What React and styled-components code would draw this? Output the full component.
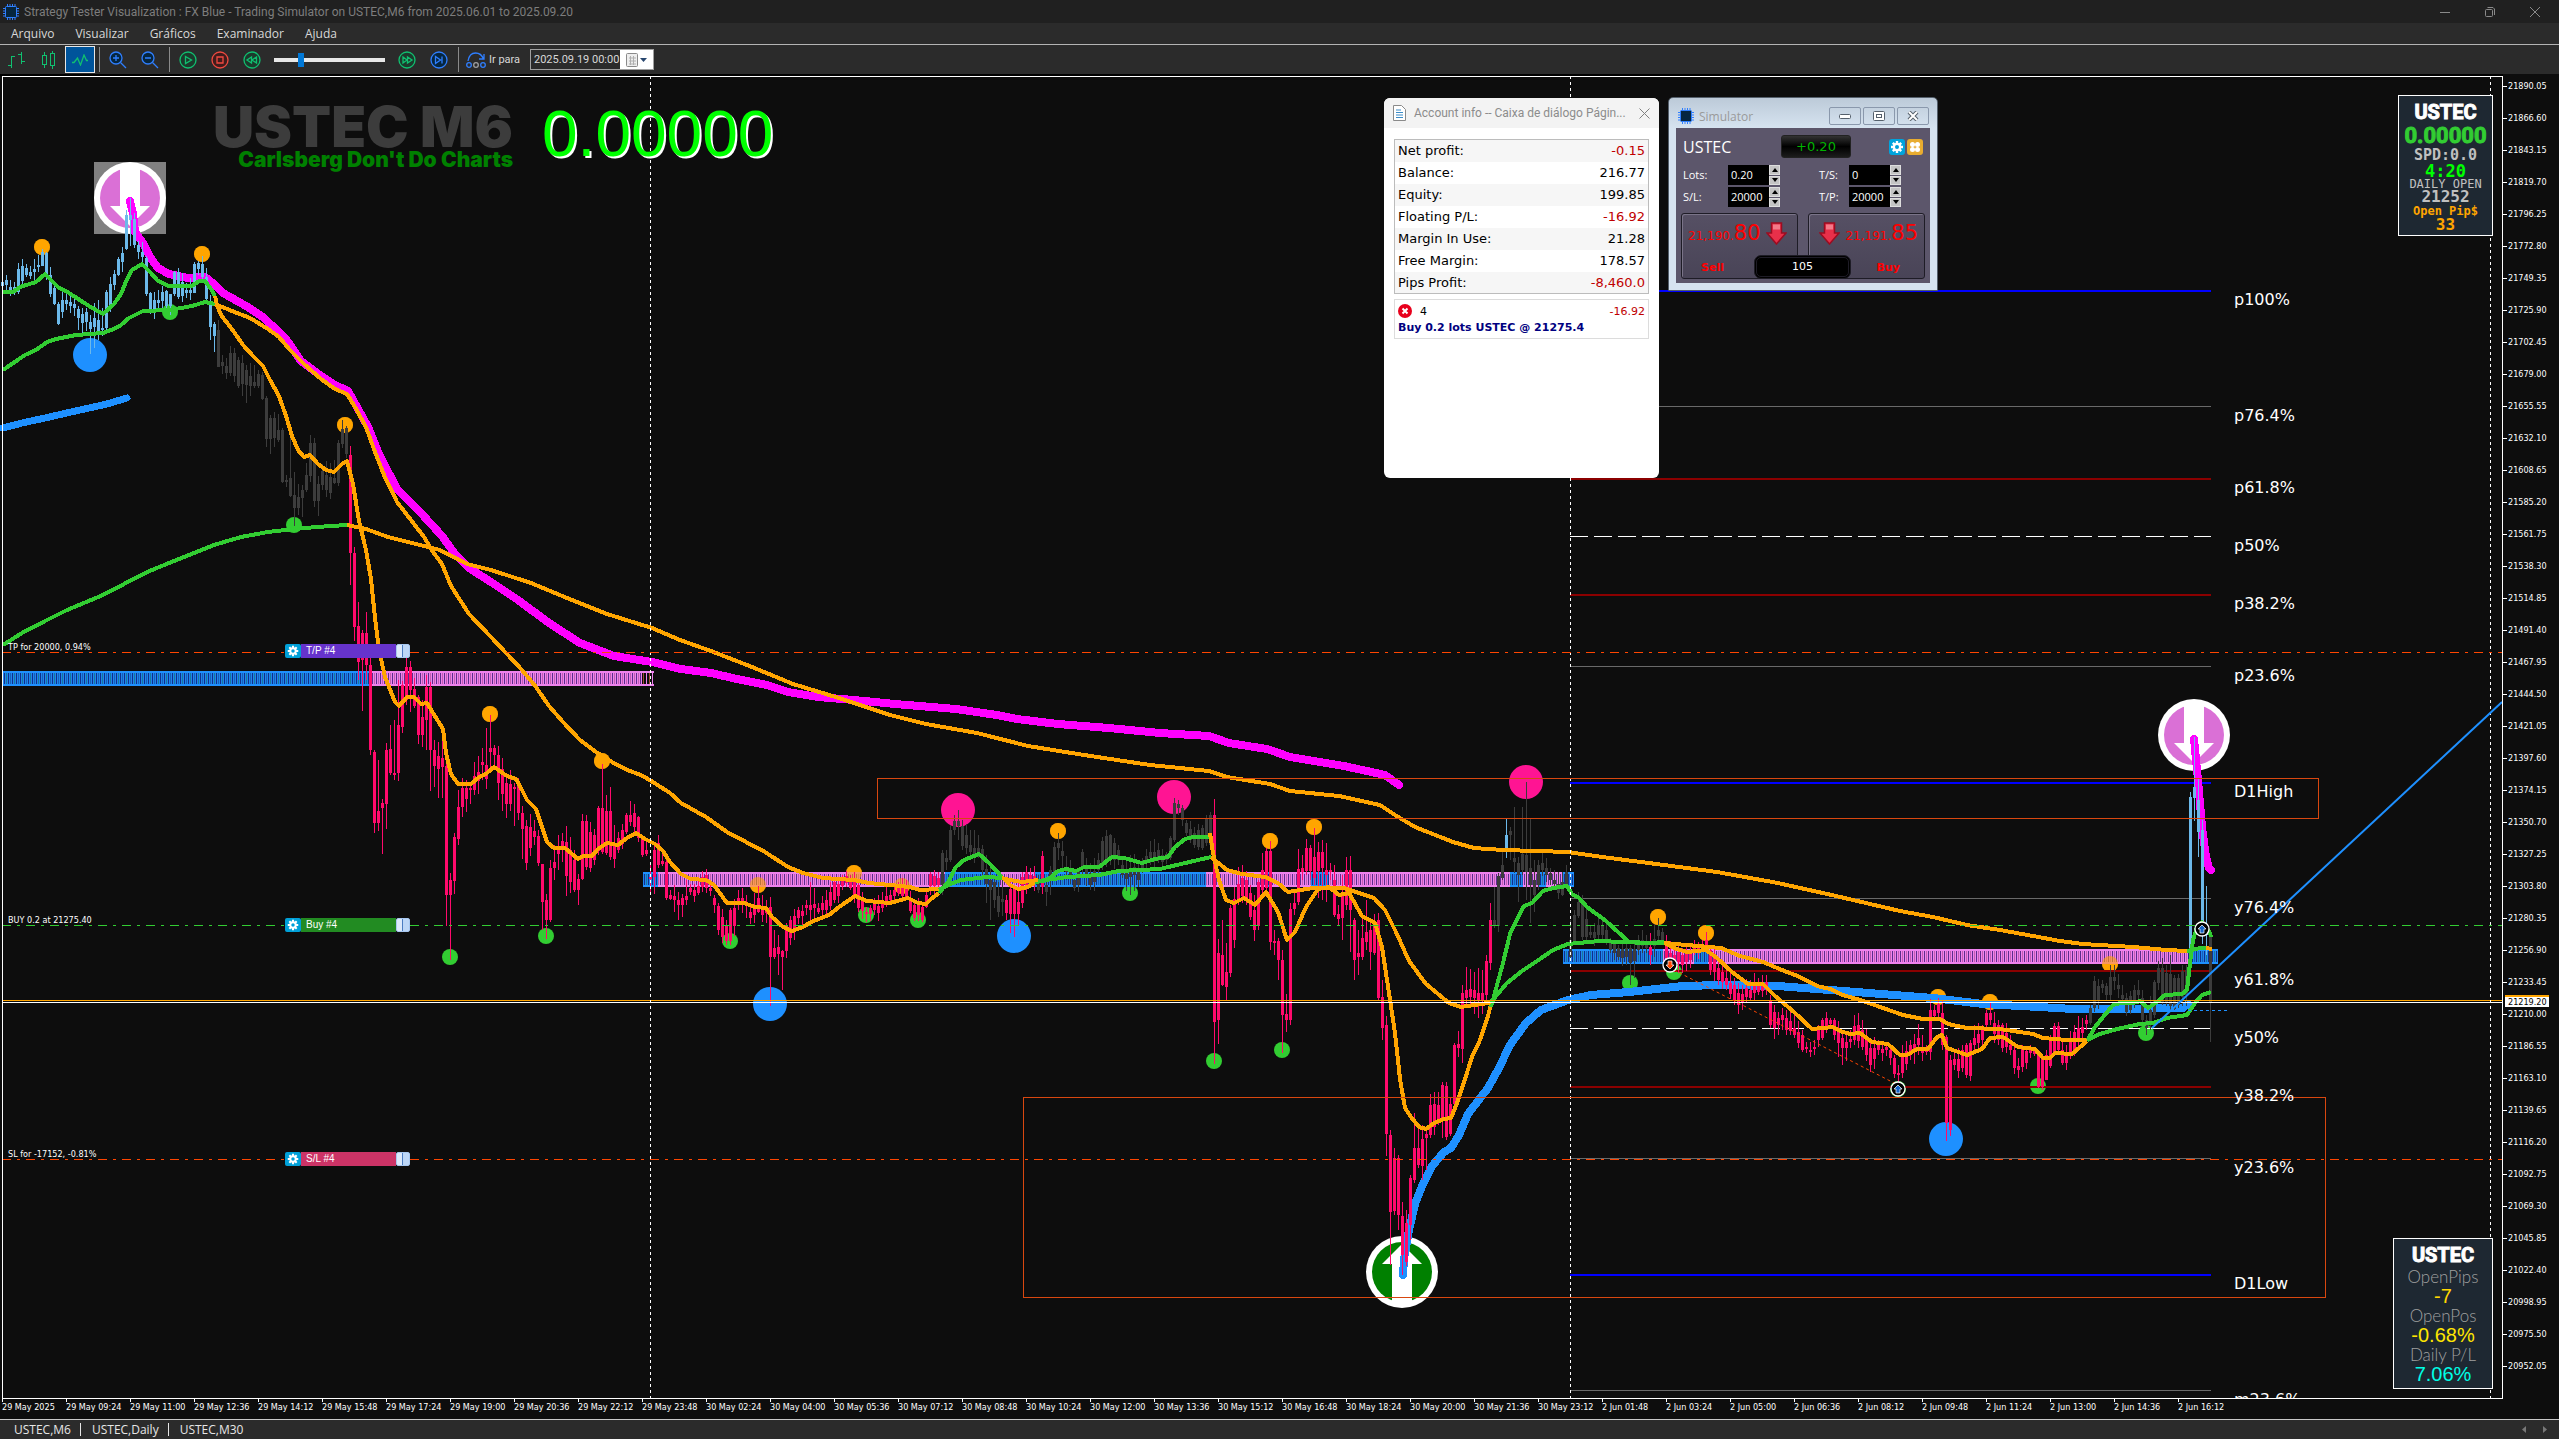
import React from 'react';
import styled, { createGlobalStyle } from 'styled-components';

const GlobalStyle = createGlobalStyle`
	* {
		box-sizing: border-box;
	}
	body {
		margin: 0;
		background: #0d0d0d;
		font-family: 'Open Sans', 'Noto Sans', sans-serif;
		font-size: 12px;
	}
	button, input {
		font: inherit;
		color: inherit;
		margin: 0;
		padding: 0;
		border: 0;
		background: none;
	}
	ul {
		list-style: none;
		margin: 0;
		padding: 0;
	}
`;

const verdana = "'DejaVu Sans', Verdana, sans-serif";
const tahoma = "'DejaVu Sans Condensed', 'Open Sans', sans-serif";

/* ---------- chart data ---------- */

// each key bar: x high bodyTop bodyBottom low
const BARS = `2 278 282 286 292;6 275 280 285 290;14 282 287 289 295;18 263 269 292 294;26 264 268 275 277;30 266 272 276 279;38 255 265 267 272;42 249 252 266 266;46 252 253 275 280;54 281 288 304 305;58 302 304 324 325;66 294 300 304 310;74 296 304 308 316;78 306 309 318 330;86 308 312 322 331;90 315 322 329 354;98 300 320 331 340;102 308 328 330 336;106 290 292 328 332;114 270 274 285 290;118 257 259 275 276;122 247 253 262 272;126 210 215 249 250;130 198 215 220 246;134 213 219 245 248;138 241 245 252 259;142 242 252 257 263;146 256 258 294 296;150 292 293 309 314;158 290 300 303 310;166 290 291 306 312;170 294 294 306 315;174 271 272 294 296;178 268 272 297 299;186 283 290 293 298;190 278 290 293 300;194 262 264 293 293;198 261 263 269 275;202 256 264 277 283;206 268 277 299 301;210 295 301 327 340;214 322 324 336 352;
218 320 330 367 367;222 355 362 366 374;226 358 366 373 379;230 346 353 373 376;238 357 360 386 388;246 365 370 385 403;254 365 382 386 388;258 370 374 386 388;262 372 375 399 400;266 396 398 439 447;270 415 418 439 454;274 412 418 438 447;278 414 430 440 442;282 428 430 482 483;286 475 480 482 487;290 435 478 496 497;294 472 495 508 526;298 484 497 508 515;302 485 490 498 517;306 463 475 490 492;310 435 443 476 482;314 438 443 501 507;318 476 484 501 516;322 464 471 485 490;330 463 477 493 499;334 460 478 483 484;338 440 443 483 486;342 420 429 444 448;346 426 428 454 458;
350 446 455 553 585;354 547 553 627 641;358 602 626 662 680;362 630 633 660 711;366 612 633 665 680;370 650 665 750 755;374 750 752 823 833;378 760 811 823 831;382 799 803 808 854;386 743 750 804 829;390 725 749 773 775;394 720 773 775 780;398 680 725 773 781;402 681 685 727 733;406 655 667 700 705;410 661 667 690 712;414 678 689 706 708;418 695 697 735 744;422 700 717 735 747;426 675 687 720 750;430 682 687 750 791;434 740 750 766 787;442 740 758 767 798;446 757 766 895 926;450 873 880 895 960;454 833 837 881 894;458 790 807 839 845;462 778 788 807 817;470 785 788 790 804;474 762 776 790 795;482 748 762 765 780;486 728 765 779 789;490 715 748 752 770;494 745 748 755 765;498 746 755 783 800;506 773 783 804 818;510 770 784 804 811;514 783 787 789 826;518 778 781 813 820;522 806 813 829 859;526 820 826 863 870;534 820 831 837 845;538 830 836 863 866;542 864 864 902 930;546 894 900 920 939;550 860 868 920 922;554 845 862 868 880;562 833 841 848 862;566 826 842 876 896;574 850 860 890 892;578 874 879 890 905;582 814 821 879 880;586 815 821 867 870;594 829 835 860 865;598 806 808 851 855;602 764 808 852 854;606 795 811 853 855;610 787 811 857 860;614 825 845 859 868;618 832 838 850 853;626 813 815 832 834;630 801 815 822 826;638 816 817 838 842;642 838 839 855 857;646 840 850 854 856;650 862 877 879 893;654 842 850 877 894;658 835 843 865 868;662 850 861 864 866;666 860 862 898 900;
670 890 895 899 900;678 892 900 905 920;682 894 898 905 917;686 880 896 900 905;690 884 888 892 895;698 881 886 893 895;706 869 875 888 893;710 880 888 891 896;714 895 898 905 913;718 903 906 930 935;726 920 925 941 945;730 908 910 941 945;738 890 898 902 910;746 895 903 905 918;750 903 912 918 924;758 886 898 912 913;766 900 911 913 923;770 897 907 957 1006;774 930 948 957 959;782 950 951 957 990;786 923 926 951 958;790 916 920 938 945;798 907 910 918 924;806 900 905 908 915;810 882 905 910 923;818 903 908 912 914;826 890 900 910 915;834 879 882 900 903;842 875 880 886 890;850 875 879 888 890;858 880 885 908 912;866 907 912 914 922;874 898 900 910 915;882 892 903 908 912;890 890 895 900 905;898 882 887 893 896;906 880 887 897 898;914 900 905 918 921;922 903 907 920 922;926 890 895 907 908;930 872 874 886 895;938 872 878 885 890;
942 850 853 885 895;946 850 858 862 870;950 825 830 860 862;954 815 821 830 835;958 810 821 826 840;962 820 826 846 850;970 830 845 852 858;978 835 848 853 858;982 845 849 870 875;990 865 880 890 920;994 878 882 900 908;998 882 896 912 917;1002 880 899 902 916;1006 895 900 913 920;1010 880 889 914 933;1014 885 889 914 937;1018 880 902 914 926;1022 872 877 903 908;1030 868 875 880 885;1038 875 880 890 893;1042 851 856 887 894;1046 882 885 892 906;1050 866 870 880 895;1054 842 847 875 880;1058 833 843 848 860;1066 856 867 872 880;1074 875 880 888 891;1078 868 870 885 892;1082 849 852 866 875;1090 863 873 885 890;1098 853 860 870 875;1102 837 841 866 870;1110 834 835 860 865;1118 845 850 860 865;1122 860 865 875 878;1130 855 870 877 895;1138 860 872 880 887;1142 858 862 868 873;1150 841 852 858 865;1158 843 850 858 863;1166 852 854 860 864;1170 836 838 858 860;1174 798 803 840 842;1178 800 804 808 815;1182 805 808 820 826;1186 820 823 833 836;1194 827 833 845 848;1198 824 830 847 850;1202 825 828 848 850;1210 812 815 845 848;
1214 799 815 1022 1064;1218 939 953 1020 1044;1222 920 955 985 986;1226 943 972 987 1000;1230 905 908 973 977;1238 867 884 900 905;1246 871 880 900 905;1250 885 893 917 920;1254 895 910 930 941;1258 880 882 926 930;1262 853 870 890 895;1266 848 851 888 893;1270 841 851 942 950;1274 930 941 943 955;1278 938 941 960 980;1282 950 960 1015 1053;1286 994 1014 1020 1032;1290 903 909 1020 1025;1294 890 903 909 915;1298 849 869 902 905;1302 855 868 872 880;1306 839 848 871 875;1310 845 848 871 880;1314 828 857 878 885;1318 842 852 871 898;1322 840 852 868 900;1326 843 870 875 902;1330 863 870 872 880;1334 865 880 915 917;1338 905 914 919 926;1342 875 895 918 940;1346 857 870 905 910;1350 856 870 910 952;1354 918 920 960 980;1358 930 953 957 975;1362 915 938 957 960;1366 900 932 942 950;1370 920 930 952 970;1374 914 922 953 955;1378 913 920 998 1000;1382 980 997 1028 1040;1386 1016 1025 1134 1156;1390 1130 1135 1212 1265;1394 1148 1158 1211 1215;1398 1155 1158 1215 1230;1402 1202 1216 1255 1275;1406 1210 1223 1262 1266;1410 1175 1178 1225 1240;1414 1113 1148 1180 1183;1418 1128 1148 1165 1168;1422 1125 1139 1166 1180;1426 1130 1134 1138 1170;1430 1094 1105 1135 1138;1438 1092 1105 1120 1125;1442 1082 1085 1120 1138;1446 1082 1086 1137 1140;1450 1098 1104 1134 1136;1454 1043 1045 1104 1108;1458 1031 1044 1048 1057;1462 985 993 1049 1063;1466 967 990 998 1004;1474 972 990 998 1014;1482 970 993 1000 1014;1486 955 961 995 1000;1490 903 920 963 970;
1494 887 920 926 928;1498 873 876 926 932;1502 850 865 878 880;1506 818 835 852 858;1510 827 831 835 860;1514 807 858 862 873;1518 857 863 875 902;1522 807 854 870 875;1526 782 855 872 900;1530 818 868 885 923;1534 860 880 895 912;1538 860 865 885 890;1542 852 863 870 876;1550 868 873 880 885;1554 870 880 884 890;1562 872 882 895 896;1566 865 872 885 888;1570 920 940 957 960;1574 910 915 942 943;1578 892 902 916 918;1582 895 904 937 940;1590 925 932 935 938;1598 918 925 935 940;1602 920 925 935 940;1610 938 941 950 953;1618 945 948 957 960;1626 940 948 957 965;1630 945 948 963 985;1638 935 942 950 955;1646 935 944 948 953;1650 933 947 955 965;1658 918 930 936 940;1662 928 932 940 944;1666 935 942 958 960;1674 946 955 965 972;1682 948 955 965 973;1690 945 950 960 968;1694 940 945 950 955;1702 940 945 950 952;1706 932 940 945 950;1710 945 950 970 975;1718 962 968 980 985;1726 970 978 985 990;1734 978 985 1000 1005;1742 985 994 1003 1010;1750 980 990 998 1000;1758 978 982 992 995;1766 975 982 990 995;1770 995 1000 1025 1028;1778 1012 1018 1025 1035;1782 1008 1015 1020 1030;1786 1010 1018 1030 1035;1794 1015 1028 1035 1038;1802 1030 1035 1050 1052;1806 1042 1047 1049 1053;1814 1040 1047 1049 1055;1822 1018 1020 1038 1040;1830 1018 1020 1024 1028;1834 1018 1020 1035 1040;1842 1030 1038 1048 1065;1850 1030 1039 1042 1048;1854 1015 1026 1040 1045;1862 1020 1030 1047 1050;1870 1040 1048 1065 1072;1878 1040 1045 1050 1055;1886 1042 1047 1050 1056;1890 1045 1050 1058 1065;1894 1055 1058 1074 1078;1898 1065 1073 1075 1083;1902 1045 1056 1073 1078;1910 1040 1045 1055 1060;1918 1024 1038 1045 1055;1926 1045 1049 1052 1055;1930 999 1010 1052 1060;1934 1005 1010 1016 1020;1938 998 1004 1013 1018;1942 1000 1013 1045 1050;1946 1035 1037 1123 1141;1950 1055 1060 1130 1136;1954 1050 1059 1065 1070;1962 1045 1050 1068 1072;1966 1043 1045 1075 1078;1970 1040 1043 1076 1081;1974 1025 1038 1045 1050;1982 1025 1030 1040 1045;1986 1010 1013 1025 1030;1990 1003 1013 1020 1025;1998 1020 1025 1040 1045;2002 1023 1025 1048 1052;2010 1035 1045 1050 1055;2014 1045 1050 1068 1074;2018 1058 1066 1070 1078;2022 1045 1048 1067 1072;2030 1045 1048 1053 1058;2034 1048 1051 1054 1056;2038 1053 1055 1087 1088;2042 1055 1058 1087 1090;2046 1050 1055 1080 1080;2054 1023 1026 1052 1055;2058 1022 1026 1050 1053;2062 1040 1050 1063 1065;2066 1045 1055 1063 1070;2074 1025 1032 1052 1056;2082 1018 1027 1033 1040;2086 1015 1020 1024 1030;
2090 1005 1008 1023 1025;2094 976 981 1008 1012;2102 980 984 988 993;2106 983 986 995 1001;2110 965 977 995 1000;2114 965 977 981 990;2122 985 995 999 1002;2126 993 998 1012 1016;2134 985 990 1003 1008;2138 980 990 995 1000;2142 990 998 1020 1025;2146 1015 1020 1028 1035;2150 996 1010 1022 1030;2154 980 982 1015 1018;2158 961 968 983 990;2162 958 968 1002 1005;2166 965 973 1003 1006;2170 955 974 1006 1010;2174 975 978 1009 1010;2178 974 978 1005 1008;2186 965 970 995 1006;2190 792 797 950 955;2194 737 787 798 821;2198 778 800 832 857;2202 820 830 925 944;2206 886 930 935 955;2210 930 937 1003 1042`;

const SKY = '#6cb9ea';
const GRAY = '#3c3c3c';
const PINK = '#ff0a6c';
const ORANGE = '#ffa500';
const LIME = '#32cd32';
const BLUE = '#1e90ff';
const MAGENTA = '#ff00ff';
const RED = '#ff4500';

const PHASES = [[217, SKY], [349, GRAY], [940, PINK], [1004, GRAY], [1036, PINK], [1040, GRAY], [1044, PINK], [1212, GRAY], [1492, PINK], [1504, GRAY], [1508, SKY], [1648, GRAY], [1652, PINK], [1664, GRAY], [2088, PINK], [2188, GRAY], [2208, SKY], [9999, GRAY]];

const buildBars = () => {
	const keys = BARS.split(';').map(row => row.trim().split(' ').map(Number));
	const bars = [];
	keys.forEach((key, i) => {
		bars.push(key);
		const next = keys[i + 1];
		if (!next) return;
		for (let x = key[0] + 4; x < next[0]; x += 4) {
			const t = (x - key[0]) / (next[0] - key[0]);
			const shift = ((x * 7) % 9) - 4;
			const mix = n => Math.round(key[n] + (next[n] - key[n]) * t) + shift;
			bars.push([x, mix(1) - (x % 3) * 2, mix(2), mix(3), mix(4) + (x % 5)]);
		}
	});
	return bars.map(([x, high, top, bottom, low]) => ({ x, high, top, bottom, low, color: PHASES.find(p => x < p[0])[1] }));
};

const BAR_LIST = buildBars();

// [color, width, points]
const THICK_LINES = [
	[BLUE, 7, '3,428 22,423 45,418 71,412 107,404 127,398'],
	[MAGENTA, 8, '130,201 133,214 135,232 143,243 150,257 158,268 169,274 188,278 205,277 214,284 223,293 246,306 263,317 286,339 301,361 317,373 333,384 348,391 357,407 368,427 379,454 397,489 420,512 442,536 455,554 469,568 491,582 518,600 549,623 580,643 614,656 652,662 681,669 711,673 737,679 767,685 788,692 818,697 854,700 895,704 956,709 997,715 1017,719 1058,724 1109,728 1160,733 1209,736 1229,743 1267,749 1290,757 1344,766 1385,775 1399,785'],
	[BLUE, 8, '1403,1275 1404,1259 1409,1230 1415,1204 1422,1186 1432,1166 1444,1152 1451,1148 1459,1135 1468,1114 1488,1088 1499,1068 1510,1045 1526,1023 1541,1010 1568,1000 1591,995 1629,992 1683,986 1721,985 1778,986 1843,991 1933,998 1983,1004 2040,1007 2073,1009 2120,1009 2183,1008 2188,1004'],
	[MAGENTA, 8, '2194,739 2198,780 2202,827 2206,857 2209,868 2211,870'],
];

const THIN_LINES = [
	[LIME, '3,292 13,292 20,287 36,282 45,274 50,279 58,287 69,293 89,306 103,314 114,304 121,294 127,279 132,270 142,264 150,272 158,281 169,286 192,286 199,281 205,281 211,289 215,296'],
	[LIME, '3,370 25,355 36,350 47,342 56,339 76,335 103,333 114,329 121,325 129,318 143,311 170,310 192,306 205,302 215,304'],
	[LIME, '3,645 22,633 45,621 67,610 103,595 147,572 179,559 214,545 241,537 268,532 294,529 317,527 347,525'],
	[ORANGE, '347,525 366,529 388,537 440,550 467,564 491,570 531,583 567,598 607,614 652,628 680,640 711,651 752,667 793,684 839,698 890,715 926,724 977,733 1028,746 1084,755 1150,765 1209,771 1227,777 1270,784 1290,791 1339,796 1380,805 1395,815 1415,827 1453,842 1474,848 1503,850 1537,851 1568,852 1602,857 1664,865 1717,872 1778,883 1836,896 1900,911 1933,917 1967,925 2000,930 2033,936 2060,941 2083,944 2133,947 2167,950 2187,951'],
	[LIME, '2187,951 2200,948 2206,948'],
	[ORANGE, '2206,948 2212,949'],
	[ORANGE, '215,296 217,305 221,315 228,324 234,332 243,345 254,357 263,366 270,380 279,396 286,416 292,436 298,450 304,457 310,455 318,464 326,470 334,472 342,464 347,461 353,484 359,521 366,550 371,579 375,618 379,650 385,677 395,702 399,706 407,697 414,697 421,704 427,703 433,713 443,729 446,753 451,774 458,784 471,784 478,778 487,773 494,767 507,776 516,779 522,790 527,800 536,809 541,824 547,842 554,848 565,848 578,859 583,856 592,856 598,849 607,843 618,845 627,838 636,833 645,839 655,844 663,851 670,862 681,874 691,879 706,880 714,885 727,903 744,903 755,907 766,908 772,917 783,927 792,931 803,927 811,922 829,915 839,907 855,896 867,901 890,903 908,898 918,903 926,904 931,899 939,893'],
	[LIME, '939,893 948,882 956,867 964,860 979,854 989,863 1002,877'],
	[ORANGE, '1002,877 1010,885 1018,889 1028,887 1035,882'],
	[LIME, '1035,882 1043,881 1050,878 1058,871 1066,869 1076,871 1084,867 1099,867 1112,857 1124,858 1142,863 1155,859 1168,857 1175,847 1185,839 1193,837 1210,837'],
	[ORANGE, '1210,833 1213,853 1219,880 1226,900 1234,903 1244,898 1255,905 1266,892 1278,912 1287,940 1295,932 1306,907 1318,889 1329,887 1339,895 1349,893 1362,916 1375,923 1382,947 1389,993 1395,1033 1400,1079 1405,1108 1411,1117 1419,1127 1426,1129 1434,1123 1444,1119 1451,1118 1457,1103 1465,1079 1472,1057 1480,1040 1488,1016 1491,1004'],
	[LIME, '1491,1007 1497,985 1503,963 1510,934 1516,921 1524,906 1532,903 1543,891 1553,888 1567,886 1572,894 1579,898 1587,907 1606,921 1618,932 1629,942 1650,943 1664,942'],
	[ORANGE, '1664,943 1677,949 1687,952 1706,950 1717,958 1732,972 1748,984 1763,984 1775,996 1794,1012 1812,1029 1833,1027 1840,1031 1850,1034 1860,1033 1872,1042 1888,1044 1900,1055 1907,1055 1917,1049 1928,1049 1937,1037 1942,1035 1947,1048 1967,1055 1982,1049 1990,1038 2003,1037 2018,1047 2035,1049 2043,1058 2050,1058 2055,1053 2072,1054 2087,1041'],
	[LIME, '2087,1041 2095,1027 2103,1017 2113,1005 2120,1003 2133,1003 2140,1001 2148,1008 2157,1002 2165,995 2182,994 2187,990 2190,963 2193,940 2197,927 2202,922 2210,933 2211,937'],
	[ORANGE, '215,304 232,311 250,318 268,329 279,337 290,350 304,364 321,379 335,389 347,394 355,407 366,427 375,452 384,475 397,502 411,520 424,537 433,552 442,564 451,586 469,614 491,637 522,670 536,687 549,706 563,722 580,740 596,752 612,762 625,769 643,776 656,784 670,793 681,803 706,817 727,832 765,852 788,867 803,873 823,878 854,880 869,883 910,887 920,890 939,889'],
	[LIME, '939,890 948,885 961,880 987,877 1002,878'],
	[ORANGE, '1002,878 1010,880 1022,882 1038,880'],
	[LIME, '1038,881 1068,877 1099,875 1119,871 1160,869 1181,864 1211,857'],
	[ORANGE, '1211,857 1227,870 1242,874 1265,877 1278,883 1288,892 1313,888 1344,888 1374,898 1385,910 1396,932 1409,961 1426,984 1449,1003 1461,1007 1488,1003 1491,1002'],
	[LIME, '1491,1002 1507,983 1522,971 1537,961 1553,950 1568,944 1599,941 1646,943 1664,943'],
	[ORANGE, '1664,943 1721,948 1740,956 1763,962 1782,970 1800,977 1817,986 1830,989 1843,995 1860,1000 1883,1008 1903,1015 1923,1019 1940,1019 1948,1024 1967,1028 2000,1029 2033,1034 2043,1038 2067,1040 2087,1040'],
	[LIME, '2087,1040 2100,1034 2117,1029 2140,1024 2153,1023 2167,1018 2187,1015 2195,1003 2202,995 2211,992'],
];

const DOTS = [
	[ORANGE, 8, [[42, 247], [202, 254], [345, 425], [490, 714], [602, 761], [758, 885], [854, 873], [902, 886], [1058, 831], [1270, 841], [1314, 827], [1658, 917], [1706, 933], [1938, 997], [1990, 1002], [2110, 964]]],
	[LIME, 8, [[170, 312], [294, 525], [450, 957], [546, 936], [730, 941], [866, 915], [918, 920], [1130, 893], [1214, 1061], [1282, 1050], [1630, 983], [1674, 972], [1898, 1089], [2038, 1086], [2146, 1033]]],
	[BLUE, 17, [[90, 355], [1014, 936], [770, 1004], [1946, 1139]]],
	['#ff1493', 17, [[958, 810], [1174, 797], [1526, 782]]],
];

// [top, from, to, color name]
const BANDS = [
	[671, 3, 369, 'blue'], [671, 369, 642, 'violet'], [671, 642, 654, 'end'],
	[872, 643, 658, 'blue'], [872, 658, 945, 'violet'], [872, 945, 1000, 'blue'], [872, 1000, 1035, 'violet'], [872, 1035, 1206, 'blue'], [872, 1206, 1268, 'violet'], [872, 1268, 1272, 'blue'], [872, 1272, 1311, 'violet'], [872, 1311, 1329, 'blue'], [872, 1329, 1510, 'violet'], [872, 1510, 1523, 'blue'], [872, 1523, 1538, 'violet'], [872, 1538, 1546, 'blue'], [872, 1546, 1562, 'violet'], [872, 1562, 1574, 'blue'],
	[949, 1563, 1663, 'blue'], [949, 1663, 1694, 'violet'], [949, 1694, 1708, 'blue'], [949, 1708, 2188, 'violet'], [949, 2188, 2218, 'blue'],
];
const BAND_EDGE = { blue: BLUE, violet: '#ee82ee', end: '#ee82ee' };

const LEVELS = [
	[290, 'p100%', 'blue'], [406, 'p76.4%', 'gray'], [478, 'p61.8%', 'red'], [536, 'p50%', 'mid'], [594, 'p38.2%', 'red'], [666, 'p23.6%', 'gray'],
	[782, 'D1High', 'blue'], [898, 'y76.4%', 'gray'], [970, 'y61.8%', 'red'], [1028, 'y50%', 'mid'], [1086, 'y38.2%', 'red'], [1158, 'y23.6%', 'gray'],
	[1274, 'D1Low', 'blue'], [1390, 'm23.6%', 'gray'],
];
const LEVEL_STYLE = {
	blue: { fill: '#0000ff', height: 2 },
	gray: { fill: '#696969', height: 1 },
	red: { fill: '#8b0000', height: 2 },
};

const PRICES = Array.from({ length: 41 }, (_, i) => (21890.05 - i * 23.45).toFixed(2));
const TIMES = ['29 May 2025', '29 May 09:24', '29 May 11:00', '29 May 12:36', '29 May 14:12', '29 May 15:48', '29 May 17:24', '29 May 19:00', '29 May 20:36', '29 May 22:12', '29 May 23:48', '30 May 02:24', '30 May 04:00', '30 May 05:36', '30 May 07:12', '30 May 08:48', '30 May 10:24', '30 May 12:00', '30 May 13:36', '30 May 15:12', '30 May 16:48', '30 May 18:24', '30 May 20:00', '30 May 21:36', '30 May 23:12', '2 Jun 01:48', '2 Jun 03:24', '2 Jun 05:00', '2 Jun 06:36', '2 Jun 08:12', '2 Jun 09:48', '2 Jun 11:24', '2 Jun 13:00', '2 Jun 14:36', '2 Jun 16:12'];

/* ---------- frame ---------- */

const Window = styled.div`
	display: flex;
	flex-direction: column;
	min-height: 100vh;
	background: #0d0d0d;
	overflow: hidden;
`;

const TitleBar = styled.header`
	display: flex;
	align-items: center;
	height: 23px;
	padding: 0 2px 0 3px;
	background: #202020;
	color: #7d7d7d;
	gap: 5px;

	h1 {
		flex: 1;
		margin: 0;
		font: 400 12px Roboto, sans-serif;
	}
`;

const WindowButton = styled.button`
	display: flex;
	justify-content: center;
	width: 45px;
	height: 20px;
	color: #8a8a8a;
	align-items: center;
`;

const WindowButtons = styled.div`
	display: flex;
`;

const MenuBar = styled.nav`
	display: flex;
	gap: 21px;
	height: 22px;
	padding-left: 11px;
	background: #2b2b2b;
	border-bottom: 1px solid #b4b4b4;
	color: #d8d8d8;
	line-height: 20px;
`;

const Toolbar = styled.div`
	display: flex;
	align-items: center;
	height: 29px;
	background: #2b2b2b;
	color: #d8d8d8;
`;

const ToolButton = styled.button`
	display: flex;
	align-items: center;
	justify-content: center;
	width: ${props => (props.$active ? 30 : 32)}px;
	height: 27px;
	margin: ${props => (props.$active ? '0 1px' : 0)};
	background: ${props => (props.$active ? '#00549b' : 'none')};
	border: ${props => (props.$active ? '1px solid #e6e6e6' : 0)};
`;

const Separator = styled.span`
	width: 1px;
	height: 25px;
	margin: 0 2px 0 3px;
	background: #8a8a8a;
`;

const Speed = styled.input`
	appearance: none;
	width: 111px;
	height: 20px;
	margin: 0 6px;

	&::-webkit-slider-runnable-track {
		height: 4px;
		background: #e7e7e7;
	}
	&::-webkit-slider-thumb {
		appearance: none;
		width: 6px;
		height: 14px;
		margin-top: -5px;
		background: #0078d7;
	}
`;

const JumpButton = styled.button`
	display: flex;
	align-items: center;
	gap: 3px;
	width: 69px;
	padding-left: 5px;
	font: 11px Roboto, sans-serif;
	white-space: nowrap;
`;

const DateBox = styled.div`
	display: flex;
	height: 21px;
	border: 1px solid #a0a0a0;

	input {
		width: 89px;
		padding-left: 3px;
		font: 11px Roboto, sans-serif;
	}
	button {
		display: flex;
		align-items: center;
		justify-content: center;
		width: 33px;
		background: #fff;
	}
`;

const ChartArea = styled.main`
	display: grid;
	flex: 1;
	grid-template-columns: 1fr 56px;
	grid-template-rows: 1fr 20px;
`;

const Plot = styled.section`
	position: relative;
	overflow: hidden;
	min-height: 600px;
`;

const PlotSvg = styled.svg`
	position: absolute;
	inset: 0;
	width: 100%;
	height: 100%;
`;

const PriceScale = styled.ul`
	margin-top: -4px;
	color: #fff;
	font: 9px/32px ${tahoma};

	li {
		display: flex;
		align-items: center;
		gap: 1px;
		height: 32px;
	}
	li::before {
		content: '';
		width: 4px;
		height: 1px;
		background: #fff;
	}
`;

const ScaleColumn = styled.div`
	position: relative;
	min-width: 0;
`;

const BidTag = styled.div`
	position: absolute;
	left: 2px;
	top: 921px;
	width: 44px;
	height: 12px;
	padding-left: 3px;
	background: #fff;
	border-top: 2px solid ${ORANGE};
	color: #000;
	font: 9px/10px ${tahoma};
`;

const TimeScale = styled.ul`
	display: flex;
	grid-column: 1 / -1;
	padding-left: 2px;
	overflow: hidden;
	color: #fff;
	font: 9px/17px ${tahoma};

	li {
		flex: none;
		width: 64px;
		white-space: nowrap;
	}
	li::before {
		content: '';
		display: block;
		width: 1px;
		height: 3px;
		margin-bottom: -3px;
		background: #fff;
	}
`;

const StatusBar = styled.footer`
	display: flex;
	align-items: center;
	height: 20px;
	padding: 0 11px 0 3px;
	background: #2b2b2b;
	border-top: 1px solid #c8c8c8;
	color: #e6e6e6;
`;

const ChartTab = styled.button`
	height: 13px;
	padding: 0 9px 0 11px;
	line-height: 12px;
	border-right: ${props => (props.$last ? 0 : '1px solid #e6e6e6')};
`;

const ScrollArrows = styled.div`
	display: flex;
	gap: 16px;
	margin-left: auto;
`;

/* ---------- things lying on the chart ---------- */

const Heading = styled.div`
	position: absolute;
	top: 29px;
	right: calc(100% - 513px);
	text-align: right;
	white-space: nowrap;
	font-family: Inter, 'DejaVu Sans', sans-serif;
	font-weight: 900;

	h2 {
		margin: 0;
		color: #3c3c3c;
		font-size: 57px;
		line-height: 48px;
		font-weight: 900;
	}
	p {
		margin: 0;
		color: #008000;
		font-size: 21px;
		line-height: 17px;
	}
`;

const BigPrice = styled.div`
	position: absolute;
	top: 28px;
	left: 542px;
	color: #00ff00;
	font: 64px/64px 'Liberation Sans', Arial, sans-serif;
	text-shadow: 2px 2px 0 #fff;
`;

const InfoPanel = styled.aside`
	position: absolute;
	right: 10px;
	top: ${props => props.$top};
	bottom: ${props => props.$bottom};
	width: ${props => props.$width}px;
	padding: 5px 0 4px;
	background: #1e2832;
	border: 1px solid #fff;
	text-align: center;
	white-space: nowrap;
`;

const ImpactLine = styled.div`
	color: ${props => props.$color};
	font: 700 ${props => props.$size}px/23px Roboto, sans-serif;
	-webkit-text-stroke: 1px ${props => props.$color};
`;

const MonoLine = styled.div`
	color: ${props => props.$color};
	font: ${props => props.$weight || 700} ${props => props.$size}px/${props => props.$line}px 'DejaVu Sans Mono', monospace;
`;

const LightLine = styled.div`
	color: #a0a0a0;
	font: 300 17px/19px Lato, sans-serif;
`;

const LedLine = styled.div`
	color: ${props => props.$color};
	font: 20px/20px 'Liberation Sans', Arial, sans-serif;
`;

const OrderTag = styled.div`
	position: absolute;
	left: 285px;
	top: ${props => props.$top}px;
	display: flex;
	width: 125px;
	height: 14px;
	color: #fff;
	font: 10px/14px 'Liberation Sans', Arial, sans-serif;

	button {
		display: flex;
		align-items: center;
		justify-content: center;
		width: 16px;
		background: #00a0d8;
		border-radius: 2px;
	}
	span {
		flex: 1;
		padding-left: 5px;
		background: ${props => props.$color};
	}
	i {
		width: 14px;
		background: linear-gradient(90deg, #dce9fa 0 5px, #4a7cc0 5px 6px, #bcd6f6 6px 12px);
		border: 1px solid #a8c8f0;
		border-radius: 2px;
	}
`;

/* ---------- account dialog ---------- */

const Dialog = styled.section`
	position: absolute;
	left: 1384px;
	top: 24px;
	width: 275px;
	height: 380px;
	background: #fff;
	border-radius: 6px;
	overflow: hidden;
	color: #000;
	font-family: ${verdana};
`;

const DialogTitle = styled.header`
	display: flex;
	align-items: center;
	gap: 8px;
	height: 30px;
	padding: 0 9px;
	background: #f3f3f3;
	color: #8c8c8c;
	font: 12px Roboto, sans-serif;

	span {
		flex: 1;
		white-space: nowrap;
	}
	button {
		display: flex;
	}
`;

const AccountTable = styled.table`
	width: 255px;
	margin: 11px 10px 5px;
	border: 1px solid #bcbcbc;
	border-collapse: collapse;
	font-size: 13px;

	tr:nth-child(odd) {
		background: #f6f6f6;
	}
	th, td {
		height: 22px;
		padding: 0 3px;
		font-weight: 400;
		text-align: left;
	}
	td {
		text-align: right;
		color: #000;
	}
	.negative {
		color: #c00000;
	}
`;

const Position = styled.div`
	width: 255px;
	height: 40px;
	margin: 0 10px;
	padding: 3px;
	border: 1px solid #dcdcdc;
	font-size: 11px;

	div {
		display: flex;
		align-items: center;
		gap: 8px;
		height: 16px;
	}
	button {
		display: flex;
	}
	em {
		margin-left: auto;
		color: #c00000;
		font-style: normal;
	}
	strong {
		display: block;
		color: #000080;
		line-height: 18px;
	}
`;

/* ---------- simulator window ---------- */

const SimWindow = styled.section`
	position: absolute;
	left: 1668px;
	top: 23px;
	width: 270px;
	padding: 0 7px 7px;
	background: linear-gradient(#bccad8, #d6e3f0 30px);
	border: 1px solid #55606c;
	border-radius: 5px 5px 0 0;
`;

const SimTitle = styled.header`
	display: flex;
	align-items: center;
	gap: 2px;
	height: 30px;
	padding: 6px 1px 0 2px;
	color: #9a9a9a;

	span {
		flex: 1;
		padding-left: 3px;
	}
	button {
		display: flex;
		align-items: center;
		justify-content: center;
		width: 32px;
		height: 18px;
		border: 1px solid #8a98ac;
		border-radius: 2px;
	}
`;

const SimBody = styled.div`
	height: 155px;
	padding: 7px 5px 4px 7px;
	background: #5c566b;
	color: #fff;
`;

const SimHead = styled.div`
	display: grid;
	grid-template-columns: 98px 70px 1fr 16px 16px;
	align-items: center;
	height: 23px;
	padding-right: 2px;
	font-size: 16px;

	output {
		height: 23px;
		border: 1px solid #222;
		border-radius: 3px;
		background: linear-gradient(#333, #000 50%, #1c1c1c);
		color: #00b400;
		font: 13px/21px ${verdana};
		text-align: center;
	}
	button {
		display: flex;
	}
	button:nth-of-type(1) {
		margin-left: -2px;
	}
`;

const SimFields = styled.div`
	display: grid;
	grid-template-columns: 121px 1fr;
	gap: 2px 15px;
	margin: 7px 0 6px;
`;

const Field = styled.div`
	display: flex;
	height: 20px;
	font-size: 11px;
	line-height: 20px;

	label {
		width: ${props => props.$label}px;
	}
	input {
		width: 41px;
		padding-left: 3px;
		background: #000;
	}
	div {
		display: flex;
		flex-direction: column;
		gap: 1px;
		width: 11px;
	}
	button {
		display: flex;
		flex: 1;
		align-items: center;
		justify-content: center;
		background: #c4c4c4;
		border: 1px solid #dedede;
	}
`;

const Deal = styled.div`
	position: relative;
	display: flex;
	justify-content: space-between;
	margin-left: -2px;
	height: 66px;
`;

const DealButton = styled.button`
	display: flex;
	flex-direction: column;
	justify-content: space-between;
	align-items: ${props => (props.$buy ? 'flex-end' : 'flex-start')};
	width: 117px;
	padding: 7px 6px 3px;
	border: 1px solid #1e1c26;
	border-radius: 3px;
	background: linear-gradient(#565064, #494457);
	box-shadow: inset 1px 1px 0 #7a7488;
	color: #ff0000;
	font-family: ${verdana};

	span {
		display: flex;
		align-items: baseline;
		flex-direction: ${props => (props.$buy ? 'row-reverse' : 'row')};
		font-size: 12px;
	}
	b {
		font-weight: 400;
		font-size: 21px;
		line-height: 24px;
	}
	svg {
		align-self: center;
		margin: ${props => (props.$buy ? '0 5px 0 0' : '0 0 0 5px')};
	}
	strong {
		padding: 0 ${props => (props.$buy ? 18 : 13)}px;
		font: 700 11px/15px ${verdana};
	}
`;

const Spread = styled.output`
	position: absolute;
	left: 73px;
	bottom: 0;
	width: 97px;
	height: 24px;
	border: 3px double #1e1c26;
	border-radius: 7px;
	background: #000;
	font: 11px/18px ${verdana};
	text-align: center;
`;

/* ---------- icons ---------- */

const ChipIcon = () => (
	<svg width="16" height="16" viewBox="0 0 16 16">
		<path d="M4.500 0v16M7 0v16M9.500 0v16M12 0v16M0 4.500h16M0 7h16M0 9.500h16M0 12h16" stroke="#2f7fff" />
		<rect x="2.500" y="2.500" width="11" height="11" rx="1" fill="#06263f" stroke="#2f7fff" />
	</svg>
);

const Gear = ({ size, bg }) => (
	<svg width={size} height={size} viewBox="0 0 16 16">
		{bg && <rect width="16" height="16" rx="3" fill={bg} />}
		<path d="M8 2v12M2 8h12M3.800 3.800l8.400 8.400M12.200 3.800l-8.400 8.400" stroke="#fff" strokeWidth="2.400" />
		<circle cx="8" cy="8" r="4.200" fill="#fff" />
		<circle cx="8" cy="8" r="2" fill="#00a0d8" />
	</svg>
);

const RoundIcon = ({ stroke, fill, d }) => (
	<svg width="18" height="18" viewBox="0 0 18 18" fill="none" stroke={stroke} strokeWidth="1.300">
		<circle cx="9" cy="9" r="8" fill={fill} />
		<path d={d} />
	</svg>
);

const ZoomIcon = ({ plus }) => (
	<svg width="18" height="18" viewBox="0 0 18 18" fill="none" stroke="#2f7fff" strokeWidth="1.300">
		<circle cx="7" cy="7" r="6" fill="#06263f" />
		<path d={plus ? 'M11.500 11.500L17 17M4 7h6M7 4v6' : 'M11.500 11.500L17 17M4 7h6'} />
	</svg>
);

const RedArrow = () => (
	<svg width="21" height="23" viewBox="0 0 21 23">
		<path d="M5.500 1h10v10H20l-9.500 11L1 11h4.500z" fill="#e8304a" stroke="#9c0c20" strokeWidth="1.500" />
		<path d="M7 2.500h7v5H7z" fill="#f47a88" />
	</svg>
);

const Caret = ({ up }) => (
	<svg width="6" height="4" viewBox="0 0 6 4">
		<path d={up ? 'M0 4l3-4 3 4z' : 'M0 0l3 4 3-4z'} fill="#000" />
	</svg>
);

/* ---------- chart parts ---------- */

const Signal = ({ x, y, color, up, framed }) => (
	<g>
		{framed && <rect x={x - 36} y={y - 36} width="72" height="72" fill="#808080" />}
		<circle cx={x} cy={y} r="36" fill="#fff" />
		<circle cx={x} cy={y} r="30" fill={color} />
		<path
			d={up
				? `M${x - 10} ${y + 31}V${y - 8}H${x - 20}L${x} ${y - 28}L${x + 20} ${y - 8}H${x + 10}V${y + 31}z`
				: `M${x - 10} ${y - 31}V${y + 8}H${x - 20}L${x} ${y + 28}L${x + 20} ${y + 8}H${x + 10}V${y - 31}z`}
			fill="#fff"
		/>
	</g>
);

const OrderMark = ({ x, y, color, up }) => (
	<g>
		<circle cx={x} cy={y} r="7" fill="#000" stroke="#fff" strokeWidth="1.300" />
		<path
			d={up ? `M${x - 4} ${y}l4-4 4 4h-2v4h-4v-4z` : `M${x - 4} ${y}l4 4 4-4h-2v-4h-4v4z`}
			fill={color}
			stroke="#fff"
			strokeWidth="0.700"
		/>
	</g>
);

const DashDot = ({ y, color }) => (
	<path d={`M2 ${y}.5H2502`} stroke={color} strokeDasharray="9 6 3 6" shapeRendering="crispEdges" />
);

const PriceChart = () => (
	<PlotSvg viewBox="0 74 2503 1325" preserveAspectRatio="xMinYMin meet">
		<defs>
			<pattern id="blue" width="8" height="8" patternUnits="userSpaceOnUse">
				<rect width="8" height="8" fill="#1e84ee" />
				<path d="M.5 0v8M4.500 0v8" stroke="#10308a" />
				<path d="M2.500 0v8" stroke="#1860b8" />
				<path d="M6.500 0v8" stroke="#177a9c" />
			</pattern>
			<pattern id="violet" width="8" height="8" patternUnits="userSpaceOnUse">
				<rect width="8" height="8" fill="#ee82ee" />
				<path d="M.5 0v8M4.500 0v8" stroke="#5c2d8c" />
				<path d="M2.500 0v8M6.500 0v8" stroke="#c060b0" />
			</pattern>
			<pattern id="end" width="6" height="8" patternUnits="userSpaceOnUse">
				<rect width="6" height="8" fill="#0d0d0d" />
				<path d="M1.500 0v8" stroke="#a04a30" />
				<path d="M4.500 0v8" stroke="#ee82ee" />
			</pattern>
		</defs>

		<Signal x={130} y={198} color="#da70d6" framed />
		<Signal x={2194} y={735} color="#da70d6" />
		<Signal x={1402} y={1272} color="#008000" up />
		{DOTS.map(([color, r, spots]) => spots.map(([x, y]) => <circle key={`${x}-${y}`} cx={x} cy={y} r={r} fill={color} />))}

		<g shapeRendering="crispEdges">
			{BANDS.map(([y, from, to, kind]) => (
				<g key={`${y}-${from}`}>
					<rect x={from} y={y} width={to - from} height="15" fill={`url(#${kind})`} />
					<path d={`M${from} ${y + 1}H${to}M${from} ${y + 14}H${to}`} stroke={BAND_EDGE[kind]} strokeWidth="2" />
				</g>
			))}
		</g>
		{/* dots shine through the bands */}
		<g fill={ORANGE} opacity="0.6">
			{DOTS[0][2].map(([x, y]) => <circle key={`${x}-${y}`} cx={x} cy={y} r="8" />)}
		</g>

		<g shapeRendering="crispEdges">
			{LEVELS.map(([y, name, kind]) =>
				kind === 'mid' ? (
					<path key={name} d={`M1570 ${y}.5H2211`} stroke="#fff" strokeDasharray="18 6" />
				) : (
					<rect key={name} x="1570" y={y} width="641" {...LEVEL_STYLE[kind]} />
				),
			)}

			<g fill="none" strokeLinejoin="round" strokeLinecap="round">
				{THICK_LINES.map(([color, width, points]) => (
					<polyline key={points} points={points} stroke={color} strokeWidth={width} />
				))}
			</g>

			{BAR_LIST.map(bar => (
				<g key={bar.x} fill={bar.color}>
					<rect x={bar.x} y={bar.high} width="1" height={Math.max(1, bar.low - bar.high)} />
					<rect x={bar.x - 1} y={bar.top} width="3" height={Math.max(2, bar.bottom - bar.top)} />
				</g>
			))}

			<g fill="none" strokeWidth="4" strokeLinejoin="round">
				{THIN_LINES.map(([color, points]) => (
					<polyline key={points} points={points} stroke={color} />
				))}
			</g>

			<rect x="2" y="1000" width="2500" height="1" fill={ORANGE} />
			<rect x="2" y="1002" width="2500" height="1" fill="#fff" />
			<path d="M2188 1010.500H2227" stroke={BLUE} strokeDasharray="3 3" />
			<path d="M650.500 76V1398M1570.500 76V1398M2490.500 76V1398" stroke="#fff" strokeDasharray="3 3" />
			<g fill="none" stroke="#d8470f">
				<rect x="877.500" y="778.500" width="1441" height="40" />
				<rect x="1023.500" y="1097.500" width="1302" height="200" />
			</g>
		</g>
		<path d="M2152 1028L2502 702" stroke={BLUE} strokeWidth="2" />
		<path d="M1674 970L1898 1085" stroke={RED} strokeDasharray="3 3" />
		<DashDot y={652} color={RED} />
		<DashDot y={925} color={LIME} />
		<DashDot y={1159} color={RED} />

		<OrderMark x={1670} y={965} color={RED} />
		<OrderMark x={1898} y={1089} color="#1464c8" up />
		<OrderMark x={2202} y={929} color="#1464c8" up />

		<g fill="#fff" fontFamily="'DejaVu Sans', Verdana, sans-serif" fontSize="16">
			{LEVELS.map(([y, name]) => (
				<text key={name} x="2234" y={y + 15}>{name}</text>
			))}
		</g>
		<g fill="#fff" fontFamily="'DejaVu Sans Condensed', 'Open Sans', sans-serif" fontSize="9">
			<text x="8" y="650">TP for 20000, 0.94%</text>
			<text x="8" y="923">BUY 0.2 at 21275.40</text>
			<text x="8" y="1157">SL for -17152, -0.81%</text>
		</g>
		<path d="M0 75H2503" stroke="#000" strokeWidth="2" />
		<path d="M2.500 1398V76.500H2502.500V1398.500H2" fill="none" stroke="#fff" shapeRendering="crispEdges" />
	</PlotSvg>
);

const AccountDialog = () => {
	const rows = [
		['Net profit:', '-0.15'],
		['Balance:', '216.77'],
		['Equity:', '199.85'],
		['Floating P/L:', '-16.92'],
		['Margin In Use:', '21.28'],
		['Free Margin:', '178.57'],
		['Pips Profit:', '-8,460.0'],
	];
	return (
		<Dialog>
			<DialogTitle>
				<svg width="13" height="16" viewBox="0 0 13 16">
					<path d="M.5.5h8l4 4v11H.5z" fill="#fff" stroke="#8a8a8a" />
					<path d="M3 5h5M3 7.500h7M3 10h7M3 12.500h7" stroke="#3c8cc8" />
				</svg>
				<span>Account info -- Caixa de diálogo Págin...</span>
				<button aria-label="Close">
					<svg width="11" height="11" viewBox="0 0 11 11" stroke="#808080"><path d="M.5.5l10 10M10.500.5l-10 10" /></svg>
				</button>
			</DialogTitle>
			<AccountTable>
				<tbody>
					{rows.map(([name, value]) => (
						<tr key={name}>
							<th scope="row">{name}</th>
							<td className={value.startsWith('-') ? 'negative' : ''}>{value}</td>
						</tr>
					))}
				</tbody>
			</AccountTable>
			<Position>
				<div>
					<button aria-label="Close position">
						<svg width="14" height="14" viewBox="0 0 14 14">
							<circle cx="7" cy="7" r="7" fill="#e8001c" />
							<path d="M4.500 4.500l5 5M9.500 4.500l-5 5" stroke="#fff" strokeWidth="2" />
						</svg>
					</button>
					4<em>-16.92</em>
				</div>
				<strong>Buy 0.2 lots USTEC @ 21275.4</strong>
			</Position>
		</Dialog>
	);
};

const SpinField = ({ id, label, value, labelWidth }) => (
	<Field $label={labelWidth}>
		<label htmlFor={id}>{label}</label>
		<input id={id} defaultValue={value} />
		<div>
			<button aria-label={`${label} up`}><Caret up /></button>
			<button aria-label={`${label} down`}><Caret /></button>
		</div>
	</Field>
);

const Simulator = () => (
	<SimWindow>
		<SimTitle>
			<ChipIcon />
			<span>Simulator</span>
			<button aria-label="Minimize">
				<svg width="12" height="5" viewBox="0 0 12 5"><rect x=".5" y=".5" width="11" height="4" rx="1" fill="#fff" stroke="#55606c" /></svg>
			</button>
			<button aria-label="Maximize">
				<svg width="12" height="10" viewBox="0 0 12 10" fill="#fff" stroke="#55606c"><rect x=".5" y=".5" width="11" height="9" rx="1" /><rect x="3.500" y="3.500" width="5" height="3" /></svg>
			</button>
			<button aria-label="Close">
				<svg width="12" height="10" viewBox="0 0 12 10"><path d="M2 1l8 8M10 1L2 9" stroke="#55606c" strokeWidth="4" /><path d="M2 1l8 8M10 1L2 9" stroke="#fff" strokeWidth="2" /></svg>
			</button>
		</SimTitle>
		<SimBody>
			<SimHead>
				<span>USTEC</span>
				<output>+0.20</output>
				<span />
				<button aria-label="Settings"><Gear size={16} bg="#00a4dc" /></button>
				<button aria-label="Tools">
					<svg width="16" height="16" viewBox="0 0 16 16">
						<rect width="16" height="16" rx="3" fill="#e8ac30" />
						<g fill="#fff"><circle cx="5.500" cy="5.500" r="2.500" /><circle cx="10.500" cy="5.500" r="2.500" /><circle cx="5.500" cy="10.500" r="2.500" /><circle cx="10.500" cy="10.500" r="2.500" /></g>
					</svg>
				</button>
			</SimHead>
			<SimFields>
				<SpinField id="lots" label="Lots:" value="0.20" labelWidth={45} />
				<SpinField id="ts" label="T/S:" value="0" labelWidth={30} />
				<SpinField id="sl" label="S/L:" value="20000" labelWidth={45} />
				<SpinField id="tp" label="T/P:" value="20000" labelWidth={30} />
			</SimFields>
			<Deal>
				<DealButton>
					<span>21,190.<b>80</b><RedArrow /></span>
					<strong>Sell</strong>
				</DealButton>
				<DealButton $buy>
					<span><b>85</b>21,191.<RedArrow /></span>
					<strong>Buy</strong>
				</DealButton>
				<Spread>105</Spread>
			</Deal>
		</SimBody>
	</SimWindow>
);

const GREEN = '#10c070';

const ToolStrip = () => (
	<Toolbar>
		<ToolButton aria-label="Bars">
			<svg width="18" height="18" viewBox="0 0 18 18" stroke={GREEN} fill="none"><path d="M4.500 5v12M1 14.500h3M5 5.500h3M14.500 1v12M11 3.500h3M15 10.500h3" /></svg>
		</ToolButton>
		<ToolButton aria-label="Candles">
			<svg width="16" height="18" viewBox="0 0 16 18" stroke={GREEN} fill="none"><path d="M4.500 1v3M4.500 14v3M12.500 0v2M12.500 15v3" /><rect x="2.500" y="4.500" width="4" height="9" /><rect x="10.500" y="2.500" width="4" height="12" /></svg>
		</ToolButton>
		<ToolButton $active aria-label="Line">
			<svg width="18" height="12" viewBox="0 0 18 12" stroke={GREEN} fill="none" strokeWidth="1.300"><path d="M1 8.500h2L6.500 4l3 7L13 1l2.500 5.500H17" /></svg>
		</ToolButton>
		<Separator />
		<ToolButton aria-label="Zoom in"><ZoomIcon plus /></ToolButton>
		<ToolButton aria-label="Zoom out"><ZoomIcon /></ToolButton>
		<Separator />
		<ToolButton aria-label="Play"><RoundIcon stroke={GREEN} fill="#1c3a2c" d="M6.500 5.500l6 3.500-6 3.500z" /></ToolButton>
		<ToolButton aria-label="Stop"><RoundIcon stroke="#f04a40" fill="#401c1c" d="M6 6h6v6H6z" /></ToolButton>
		<ToolButton aria-label="Slower"><RoundIcon stroke={GREEN} fill="#1c3a2c" d="M8.500 6v6L4 9zM13.500 6v6L9 9z" /></ToolButton>
		<Speed type="range" min="0" max="100" defaultValue="23" aria-label="Speed" />
		<ToolButton aria-label="Faster"><RoundIcon stroke={GREEN} fill="#1c3a2c" d="M5 6v6l4-3zM9.500 6v6L14 9z" /></ToolButton>
		<ToolButton aria-label="To end"><RoundIcon stroke="#2f7fff" fill="#06263f" d="M5.500 5.500v7l5-3.500zM12 5.500v7" /></ToolButton>
		<Separator />
		<JumpButton>
			<svg width="20" height="16" viewBox="0 0 20 16" fill="none" stroke="#2f7fff" strokeWidth="1.300">
				<path d="M2 9C3 3 6 1 9.500 1S16 3 17.500 7M18 2v5h-5" />
				<circle cx="3" cy="13" r="2.300" />
				<circle cx="10" cy="13" r="2.300" stroke="#a0a0a0" />
				<circle cx="17" cy="13" r="2.300" />
			</svg>
			Ir para
		</JumpButton>
		<DateBox>
			<input aria-label="Date" defaultValue="2025.09.19 00:00" />
			<button aria-label="Open calendar">
				<svg width="22" height="14" viewBox="0 0 22 14">
					<rect x=".5" y=".5" width="11" height="13" rx="1" fill="#eee" stroke="#8a8a8a" />
					<path d="M3 5h7M3 8h7M3 11h7M4.500 3v9M7.500 3v9" stroke="#b0b0b0" />
					<path d="M14 5h7l-3.500 4z" fill="#28466e" />
				</svg>
			</button>
		</DateBox>
	</Toolbar>
);

const Tag = ({ top, color, label }) => (
	<OrderTag $top={top} $color={color}>
		<button aria-label={`${label} options`}><Gear size={14} /></button>
		<span>{label}</span>
		<i />
	</OrderTag>
);

const App = () => (
	<>
		<GlobalStyle />
		<Window>
			<TitleBar>
				<ChipIcon />
				<h1>Strategy Tester Visualization : FX Blue - Trading Simulator on USTEC,M6 from 2025.06.01 to 2025.09.20</h1>
				<WindowButtons>
					<WindowButton aria-label="Minimize"><svg width="10" height="10" stroke="currentColor"><path d="M0 5.500h10" /></svg></WindowButton>
					<WindowButton aria-label="Restore"><svg width="10" height="10" fill="none" stroke="currentColor"><rect x=".5" y="2.500" width="7" height="7" rx="1" /><path d="M2.500.5H8L9.500 2v6" /></svg></WindowButton>
					<WindowButton aria-label="Close"><svg width="10" height="10" stroke="currentColor"><path d="M0 0l10 10M10 0L0 10" /></svg></WindowButton>
				</WindowButtons>
			</TitleBar>
			<MenuBar>
				{['Arquivo', 'Visualizar', 'Gráficos', 'Examinador', 'Ajuda'].map(item => <button key={item}>{item}</button>)}
			</MenuBar>
			<ToolStrip />
			<ChartArea>
				<Plot>
					<PriceChart />
					<Heading>
						<h2>USTEC M6</h2>
						<p>Carlsberg Don't Do Charts</p>
					</Heading>
					<BigPrice>0.00000</BigPrice>
					<Tag top={570} color="#6633cc" label="T/P #4" />
					<Tag top={844} color="#228b22" label="Buy #4" />
					<Tag top={1078} color="#cc3366" label="S/L #4" />
					<InfoPanel $top="21px" $width={95}>
						<ImpactLine $color="#fff" $size={20}>USTEC</ImpactLine>
						<ImpactLine $color={LIME} $size={22}>0.00000</ImpactLine>
						<MonoLine $color="#c0c0c0" $size={15} $line={17}>SPD:0.0</MonoLine>
						<MonoLine $color="#00ff00" $size={17} $line={15}>4:20</MonoLine>
						<MonoLine $color="#c0c0c0" $size={12} $line={11} $weight={400}>DAILY OPEN</MonoLine>
						<MonoLine $color="#c0c0c0" $size={16} $line={14}>21252</MonoLine>
						<MonoLine $color={ORANGE} $size={12} $line={14}>Open Pip$</MonoLine>
						<MonoLine $color={ORANGE} $size={16} $line={13}>33</MonoLine>
					</InfoPanel>
					<InfoPanel $bottom="10px" $width={100}>
						<ImpactLine $color="#fff" $size={20}>USTEC</ImpactLine>
						<LightLine>OpenPips</LightLine>
						<LedLine $color="#ffd700">-7</LedLine>
						<LightLine>OpenPos</LightLine>
						<LedLine $color="#ffe600">-0.68%</LedLine>
						<LightLine>Daily P/L</LightLine>
						<LedLine $color="#00ffe6">7.06%</LedLine>
					</InfoPanel>
					<AccountDialog />
					<Simulator />
				</Plot>
				<ScaleColumn>
					<PriceScale>{PRICES.map(price => <li key={price}>{price}</li>)}</PriceScale>
					<BidTag>21219.20</BidTag>
				</ScaleColumn>
				<TimeScale>{TIMES.map(time => <li key={time}>{time}</li>)}</TimeScale>
			</ChartArea>
			<StatusBar>
				<ChartTab>USTEC,M6</ChartTab>
				<ChartTab>USTEC,Daily</ChartTab>
				<ChartTab $last>USTEC,M30</ChartTab>
				<ScrollArrows>
					<svg width="5" height="7"><path d="M4 0v7L0 3.500z" fill="#787878" /></svg>
					<svg width="5" height="7"><path d="M0 0v7l4-3.500z" fill="#787878" /></svg>
				</ScrollArrows>
			</StatusBar>
		</Window>
	</>
);

export default App;
